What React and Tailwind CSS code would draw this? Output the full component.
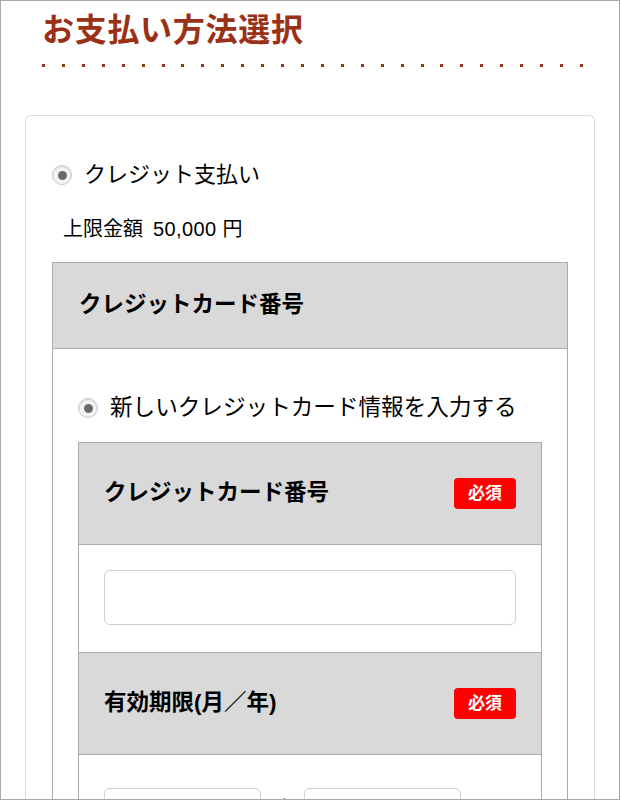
import React from "react";

const FONT = { fontFamily: '"Liberation Sans", "Noto Sans CJK JP", sans-serif' };

function Radio() {
  return (
    <span className="flex h-[20px] w-[20px] shrink-0 items-center justify-center rounded-full border border-[#c8c8c8] bg-[#f4f4f4] shadow-[inset_0_1px_2px_rgba(0,0,0,0.12)]">
      <span className="h-[9px] w-[9px] rounded-full bg-[#6a6a6a]" />
    </span>
  );
}

function Badge() {
  return (
    <span className="flex h-[31px] w-[62px] items-center justify-center rounded-[4px] bg-[#ff0000] text-[17px] font-bold leading-none text-white">
      必須
    </span>
  );
}

export default function App() {
  const dots = Array.from({ length: 28 });
  return (
    <div
      className="h-[800px] w-[620px] overflow-hidden border border-[#a9a9a9] bg-white text-black"
      style={FONT}
    >
      <div className="pl-[41px] pr-[38px] pt-[12px]">
        <h1 className="text-[32px] font-bold leading-[34px] tracking-[0.7px] text-[#9a3016]">
          お支払い方法選択
        </h1>
        <div className="mt-[17px] flex w-[541px] justify-between">
          {dots.map((_, i) => (
            <span key={i} className="h-[3px] w-[3px] bg-[#9a3016]" />
          ))}
        </div>
      </div>

      <div className="ml-[24px] mt-[48px] w-[570px] rounded-t-[6px] border border-b-0 border-[#dcdcdc] px-[26px] pt-[44px] pb-[40px]">
        <div className="flex h-[30px] items-center gap-[12px]">
          <Radio />
          <span className="text-[22px] leading-none">クレジット支払い</span>
        </div>
        <div className="mt-[26px] flex items-center pl-[11px] text-[20px] leading-[26px]">
          <span>上限金額</span>
          <span className="ml-[10px] tracking-[0.4px]">50,000</span>
          <span className="ml-[6px]">円</span>
        </div>

        <div className="mt-[20px] border border-[#acacac]">
          <div className="flex h-[86px] items-center border-b border-[#acacac] bg-[#d9d9d9] px-[26px]">
            <span className="text-[22.5px] font-bold leading-none">クレジットカード番号</span>
          </div>
          <div className="px-[25px] pt-[44px]">
            <div className="flex h-[30px] items-center gap-[12px]">
              <Radio />
              <span className="text-[22.6px] leading-none">新しいクレジットカード情報を入力する</span>
            </div>

            <div className="mt-[19px] border border-[#acacac]">
              <div className="flex h-[102px] items-center justify-between border-b border-[#acacac] bg-[#d9d9d9] px-[25px]">
                <span className="text-[22.5px] font-bold leading-none">クレジットカード番号</span>
                <Badge />
              </div>
              <div className="border-b border-[#acacac] px-[25px] pt-[25px] pb-[27px]">
                <div className="h-[55px] w-full rounded-[6px] border border-[#cfcfcf] bg-white" />
              </div>
              <div className="flex h-[102px] items-center justify-between border-b border-[#acacac] bg-[#d9d9d9] px-[25px]">
                <span className="text-[22.5px] font-bold leading-none">有効期限(月／年)</span>
                <Badge />
              </div>
              <div className="flex items-start px-[25px] pt-[33px] pb-[40px]">
                <div className="h-[55px] w-[157px] rounded-[6px] border border-[#cfcfcf] bg-white" />
                <span className="flex w-[43px] justify-center pt-[8px] text-[20px] leading-none text-[#888]">/</span>
                <div className="h-[55px] w-[157px] rounded-[6px] border border-[#cfcfcf] bg-white" />
              </div>
            </div>
          </div>
        </div>
      </div>
    </div>
  );
}
